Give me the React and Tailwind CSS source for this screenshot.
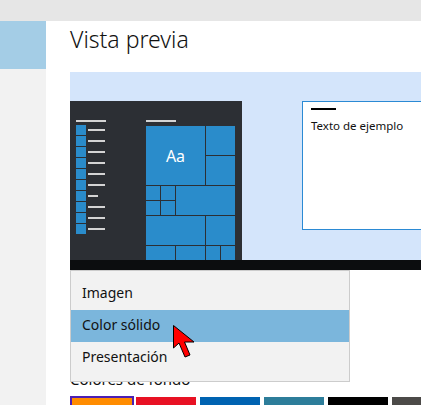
import React from "react";

const swatches = ["#ff8c00", "#e81123", "#0063b1", "#2d7d9a", "#000000", "#4c4a48"];

function StartMenu() {
  const rows = [17, 17, 17, 17, 17, 17, 10, 17, 17, 17];
  return (
    <div className="flex h-[159px] w-[172px] shrink-0 bg-[#2c2f34] pl-[6px] pt-[19px]">
      <div className="flex w-[30px] flex-col">
        <div className="mb-[3px] h-[2px] w-[30px] bg-[#d4d4d4]" />
        <div className="flex flex-col gap-px">
          {rows.map((w, i) => (
            <div key={i} className="flex h-[10px] items-center">
              <div className="h-[10px] w-[10px] bg-[#2a8ccb]" />
              <div className="ml-[2px] h-[2px] bg-[#d4d4d4]" style={{ width: w }} />
            </div>
          ))}
        </div>
      </div>
      <div className="ml-[40px] flex flex-col">
        <div className="mb-[4px] h-[2px] w-[30px] bg-[#d4d4d4]" />
        <div className="grid grid-cols-[repeat(6,14px)] grid-rows-[repeat(9,14px)] gap-px">
          <div className="col-span-4 row-span-4 flex items-center justify-center bg-[#2a8ccb] text-[16px] text-white">
            Aa
          </div>
          <div className="col-span-2 row-span-2 bg-[#2a8ccb]" />
          <div className="col-span-2 row-span-2 bg-[#2a8ccb]" />
          <div className="bg-[#2a8ccb]" />
          <div className="bg-[#2a8ccb]" />
          <div className="col-span-4 row-span-2 bg-[#2a8ccb]" />
          <div className="bg-[#2a8ccb]" />
          <div className="bg-[#2a8ccb]" />
          <div className="col-span-4 row-span-2 bg-[#2a8ccb]" />
          <div className="col-span-2 row-span-2 bg-[#2a8ccb]" />
          <div className="col-span-2 bg-[#2a8ccb]" />
          <div className="col-span-2 bg-[#2a8ccb]" />
          <div className="bg-[#2a8ccb]" />
          <div className="bg-[#2a8ccb]" />
        </div>
      </div>
    </div>
  );
}

function Cursor() {
  return (
    <svg
      className="absolute left-[102px] top-[54px]"
      width="24"
      height="34"
      viewBox="0 0 24 34"
    >
      <polygon
        points="0.5,0.5 0.5,23 6,18 12,32 17,30 11.5,17 21,17"
        fill="#ff0000"
        stroke="#000"
        strokeWidth="1"
        strokeLinejoin="miter"
      />
    </svg>
  );
}

export default function App() {
  return (
    <div
      className="h-[405px] w-[421px] overflow-hidden bg-white text-[#000]"
      style={{ fontFamily: '"Noto Sans", "Open Sans", sans-serif' }}
    >
      <div className="h-[21px] bg-[#e6e6e6]" />
      <div className="flex h-[384px]">
        {/* sidebar */}
        <div className="flex w-[46px] shrink-0 flex-col bg-[#f2f2f2]">
          <div className="h-[48px] bg-[#a4cde6]" />
        </div>

        {/* main */}
        <div className="relative min-w-0 flex-1 pl-[24px]">
          <h1 className="mt-[3px] h-[48px] text-[23px] leading-[30px] font-light text-[#111]">Vista previa</h1>

          <div className="relative h-[198px] overflow-hidden bg-[#d4e5fb]">
            <div className="flex pt-[29px]">
              <StartMenu />
              <div className="ml-[60px] h-[129px] w-[160px] shrink-0 border border-[#2b8ad4] bg-white pl-[8px] pt-[6px]">
                <div className="h-[2px] w-[25px] bg-black" />
                <div className="mt-[8px] text-[11.5px] leading-[16px] text-[#111]">Texto de ejemplo</div>
              </div>
            </div>
            <div className="absolute bottom-0 left-0 right-0 h-[10px] bg-[#0c0d0f]" />
          </div>

          <div className="pt-[99px]">
            <div className="text-[15px] leading-[20px] text-[#111]">Colores de fondo</div>
            <div className="mt-[7px] flex gap-[4px]">
              {swatches.map((c, i) => (
                <div
                  key={c}
                  className={
                    i === 0
                      ? "-mr-[2px] h-[40px] w-[64px] shrink-0 border-2 border-[#4c1fb4]"
                      : "mt-[1px] h-[40px] w-[60px] shrink-0"
                  }
                  style={{ backgroundColor: c }}
                />
              ))}
            </div>
          </div>

          {/* open dropdown */}
          <div className="absolute left-[24px] top-[249px] h-[112px] w-[280px] border border-[#cccccc] bg-[#f2f2f2] py-[7px] text-[14px] leading-[20px] text-[#111]">
            <div className="flex h-[32px] items-center px-[11px] pb-[2px]">Imagen</div>
            <div className="flex h-[32px] items-center bg-[#7bb6dc] px-[11px] pb-[2px]">Color sólido</div>
            <div className="flex h-[32px] items-center px-[11px] pb-[2px]">Presentación</div>
            <Cursor />
          </div>
        </div>
      </div>
    </div>
  );
}
